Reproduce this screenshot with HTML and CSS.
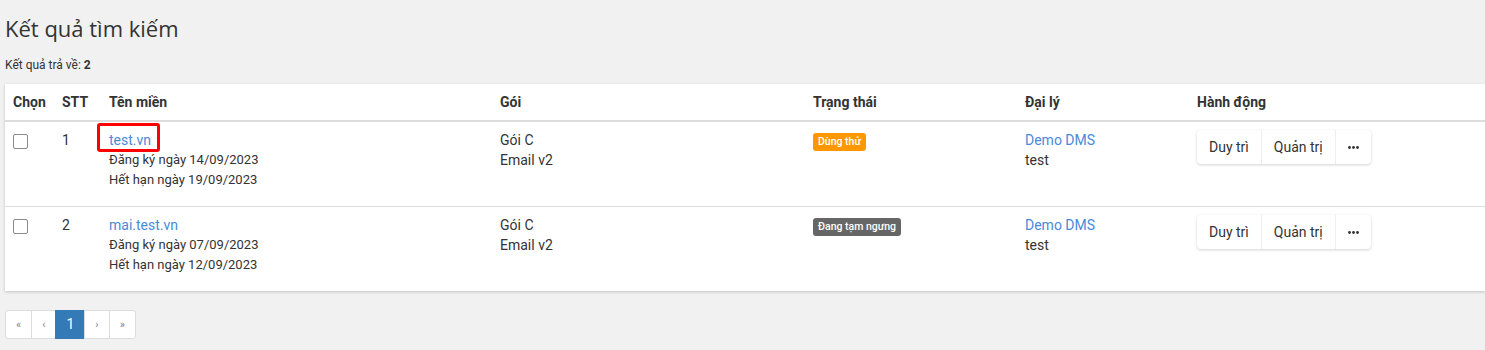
FILE: index.html
```html
<!DOCTYPE html>
<html lang="vi">
<head>
    <meta charset="UTF-8">
    <meta name="viewport" content="width=device-width, initial-scale=1.0">
    <title>Kết quả tìm kiếm</title>
    <link rel="stylesheet" href="styles.css">
</head>
<body>
    <div class="page">
        <h1>Kết quả tìm kiếm</h1>
        <p class="result-count">Kết quả trả về: <b>2</b></p>

        <div class="card">
            <table class="result-table">
                <colgroup>
                    <col class="col-select">
                    <col class="col-stt">
                    <col class="col-domain">
                    <col class="col-plan">
                    <col class="col-status">
                    <col class="col-agent">
                    <col>
                </colgroup>
                <thead>
                    <tr>
                        <th>Chọn</th>
                        <th>STT</th>
                        <th>Tên miền</th>
                        <th>Gói</th>
                        <th>Trạng thái</th>
                        <th>Đại lý</th>
                        <th>Hành động</th>
                    </tr>
                </thead>
                <tbody>
                    <tr>
                        <td><input type="checkbox" class="check"></td>
                        <td>1</td>
                        <td>
                            <a href="#" class="link marked">test.vn</a>
                            <div class="date">Đăng ký ngày 14/09/2023</div>
                            <div class="date">Hết hạn ngày 19/09/2023</div>
                        </td>
                        <td>Gói C<br>Email v2</td>
                        <td><span class="badge badge-trial">Dùng thử</span></td>
                        <td><a href="#" class="link">Demo DMS</a><br>test</td>
                        <td>
                            <div class="btn-group">
                                <button class="btn">Duy trì</button>
                                <button class="btn">Quản trị</button>
                                <button class="btn btn-more">
                                    <svg width="11" height="3" viewBox="0 0 11 3"><circle cx="1.5" cy="1.5" r="1.4"/><circle cx="5.5" cy="1.5" r="1.4"/><circle cx="9.5" cy="1.5" r="1.4"/></svg>
                                </button>
                            </div>
                        </td>
                    </tr>
                    <tr>
                        <td><input type="checkbox" class="check"></td>
                        <td>2</td>
                        <td>
                            <a href="#" class="link">mai.test.vn</a>
                            <div class="date">Đăng ký ngày 07/09/2023</div>
                            <div class="date">Hết hạn ngày 12/09/2023</div>
                        </td>
                        <td>Gói C<br>Email v2</td>
                        <td><span class="badge badge-paused">Đang tạm ngưng</span></td>
                        <td><a href="#" class="link">Demo DMS</a><br>test</td>
                        <td>
                            <div class="btn-group">
                                <button class="btn">Duy trì</button>
                                <button class="btn">Quản trị</button>
                                <button class="btn btn-more">
                                    <svg width="11" height="3" viewBox="0 0 11 3"><circle cx="1.5" cy="1.5" r="1.4"/><circle cx="5.5" cy="1.5" r="1.4"/><circle cx="9.5" cy="1.5" r="1.4"/></svg>
                                </button>
                            </div>
                        </td>
                    </tr>
                </tbody>
            </table>
        </div>

        <ul class="pagination">
            <li><a href="#">&laquo;</a></li>
            <li><a href="#">&lsaquo;</a></li>
            <li class="active"><a href="#">1</a></li>
            <li><a href="#">&rsaquo;</a></li>
            <li><a href="#">&raquo;</a></li>
        </ul>
    </div>
</body>
</html>
```

FILE: styles.css
```css
* {
    margin: 0;
    padding: 0;
    box-sizing: border-box;
}

body {
    font-family: Roboto, "Liberation Sans", Arial, sans-serif;
    font-size: 14px;
    line-height: 20px;
    color: #333;
    background-color: #f1f1f1;
    overflow: hidden;
}

.page {
    padding: 16px 0 0 5px;
}

h1 {
    font-family: "Open Sans", Roboto, sans-serif;
    font-size: 22px;
    font-weight: 500;
    line-height: 24px;
    color: #333;
}

.result-count {
    font-size: 12px;
    line-height: 17px;
    margin-top: 17px;
}

.card {
    margin-top: 10px;
    background-color: #fff;
    box-shadow: 0 1px 3px rgba(0, 0, 0, 0.2);
}

.result-table {
    width: 100%;
    border-collapse: collapse;
    table-layout: fixed;
}

.col-select { width: 49px; }
.col-stt { width: 47px; }
.col-domain { width: 391px; }
.col-plan { width: 313px; }
.col-status { width: 212px; }
.col-agent { width: 172px; }

.result-table th {
    text-align: left;
    font-weight: 700;
    padding: 8px 8px;
    border-bottom: 2px solid #ddd;
}

.result-table td {
    vertical-align: top;
    padding: 8px 8px 17px;
}

.result-table tbody tr + tr td {
    border-top: 1px solid #ddd;
}

.date {
    font-size: 13px;
    line-height: 19.5px;
}

.check {
    appearance: none;
    display: block;
    width: 15px;
    height: 15px;
    margin-top: 4px;
    border: 1px solid #8a8a8a;
    border-radius: 2px;
    background: #fff;
}

.link {
    color: #4a8ad8;
    text-decoration: none;
}

/* red highlight box around the first domain */
.marked {
    position: relative;
}

.marked::after {
    content: "";
    position: absolute;
    left: -12px;
    right: -9px;
    top: -9px;
    bottom: -4px;
    border: 3px solid #f00;
    border-radius: 3px;
}

.badge {
    display: inline-block;
    margin-top: 3px;
    padding: 3px 5px;
    font-size: 10.5px;
    line-height: 12px;
    font-weight: 500;
    color: #fff;
    border-radius: 3px;
}

.badge-trial { background-color: #ff9800; }
.badge-paused { background-color: #666; }

.btn-group {
    display: inline-flex;
    background: #fff;
    border-radius: 4px;
    box-shadow: 0 1px 3px rgba(0, 0, 0, 0.18);
}

.btn {
    font-family: inherit;
    font-size: 14px;
    line-height: 20px;
    color: #333;
    background: transparent;
    border: none;
    padding: 7px 12px;
    cursor: pointer;
}

.btn + .btn {
    border-left: 1px solid #eee;
}

.btn-more {
    display: flex;
    align-items: center;
}

.btn-more svg {
    fill: #333;
}

.pagination {
    list-style: none;
    display: inline-flex;
    margin-top: 19px;
    border-radius: 3px;
}

.pagination li a {
    display: block;
    padding: 5px 10px;
    font-size: 11px;
    line-height: 17px;
    color: #8a7d92;
    text-decoration: none;
    background: #fff;
    border: 1px solid #ddd;
    margin-left: -1px;
}

.pagination li:first-child a {
    margin-left: 0;
    border-radius: 3px 0 0 3px;
}

.pagination li:last-child a {
    border-radius: 0 3px 3px 0;
}

.pagination li.active a {
    background: #337ab7;
    border-color: #337ab7;
    color: #fff;
    font-size: 14px;
}
```
